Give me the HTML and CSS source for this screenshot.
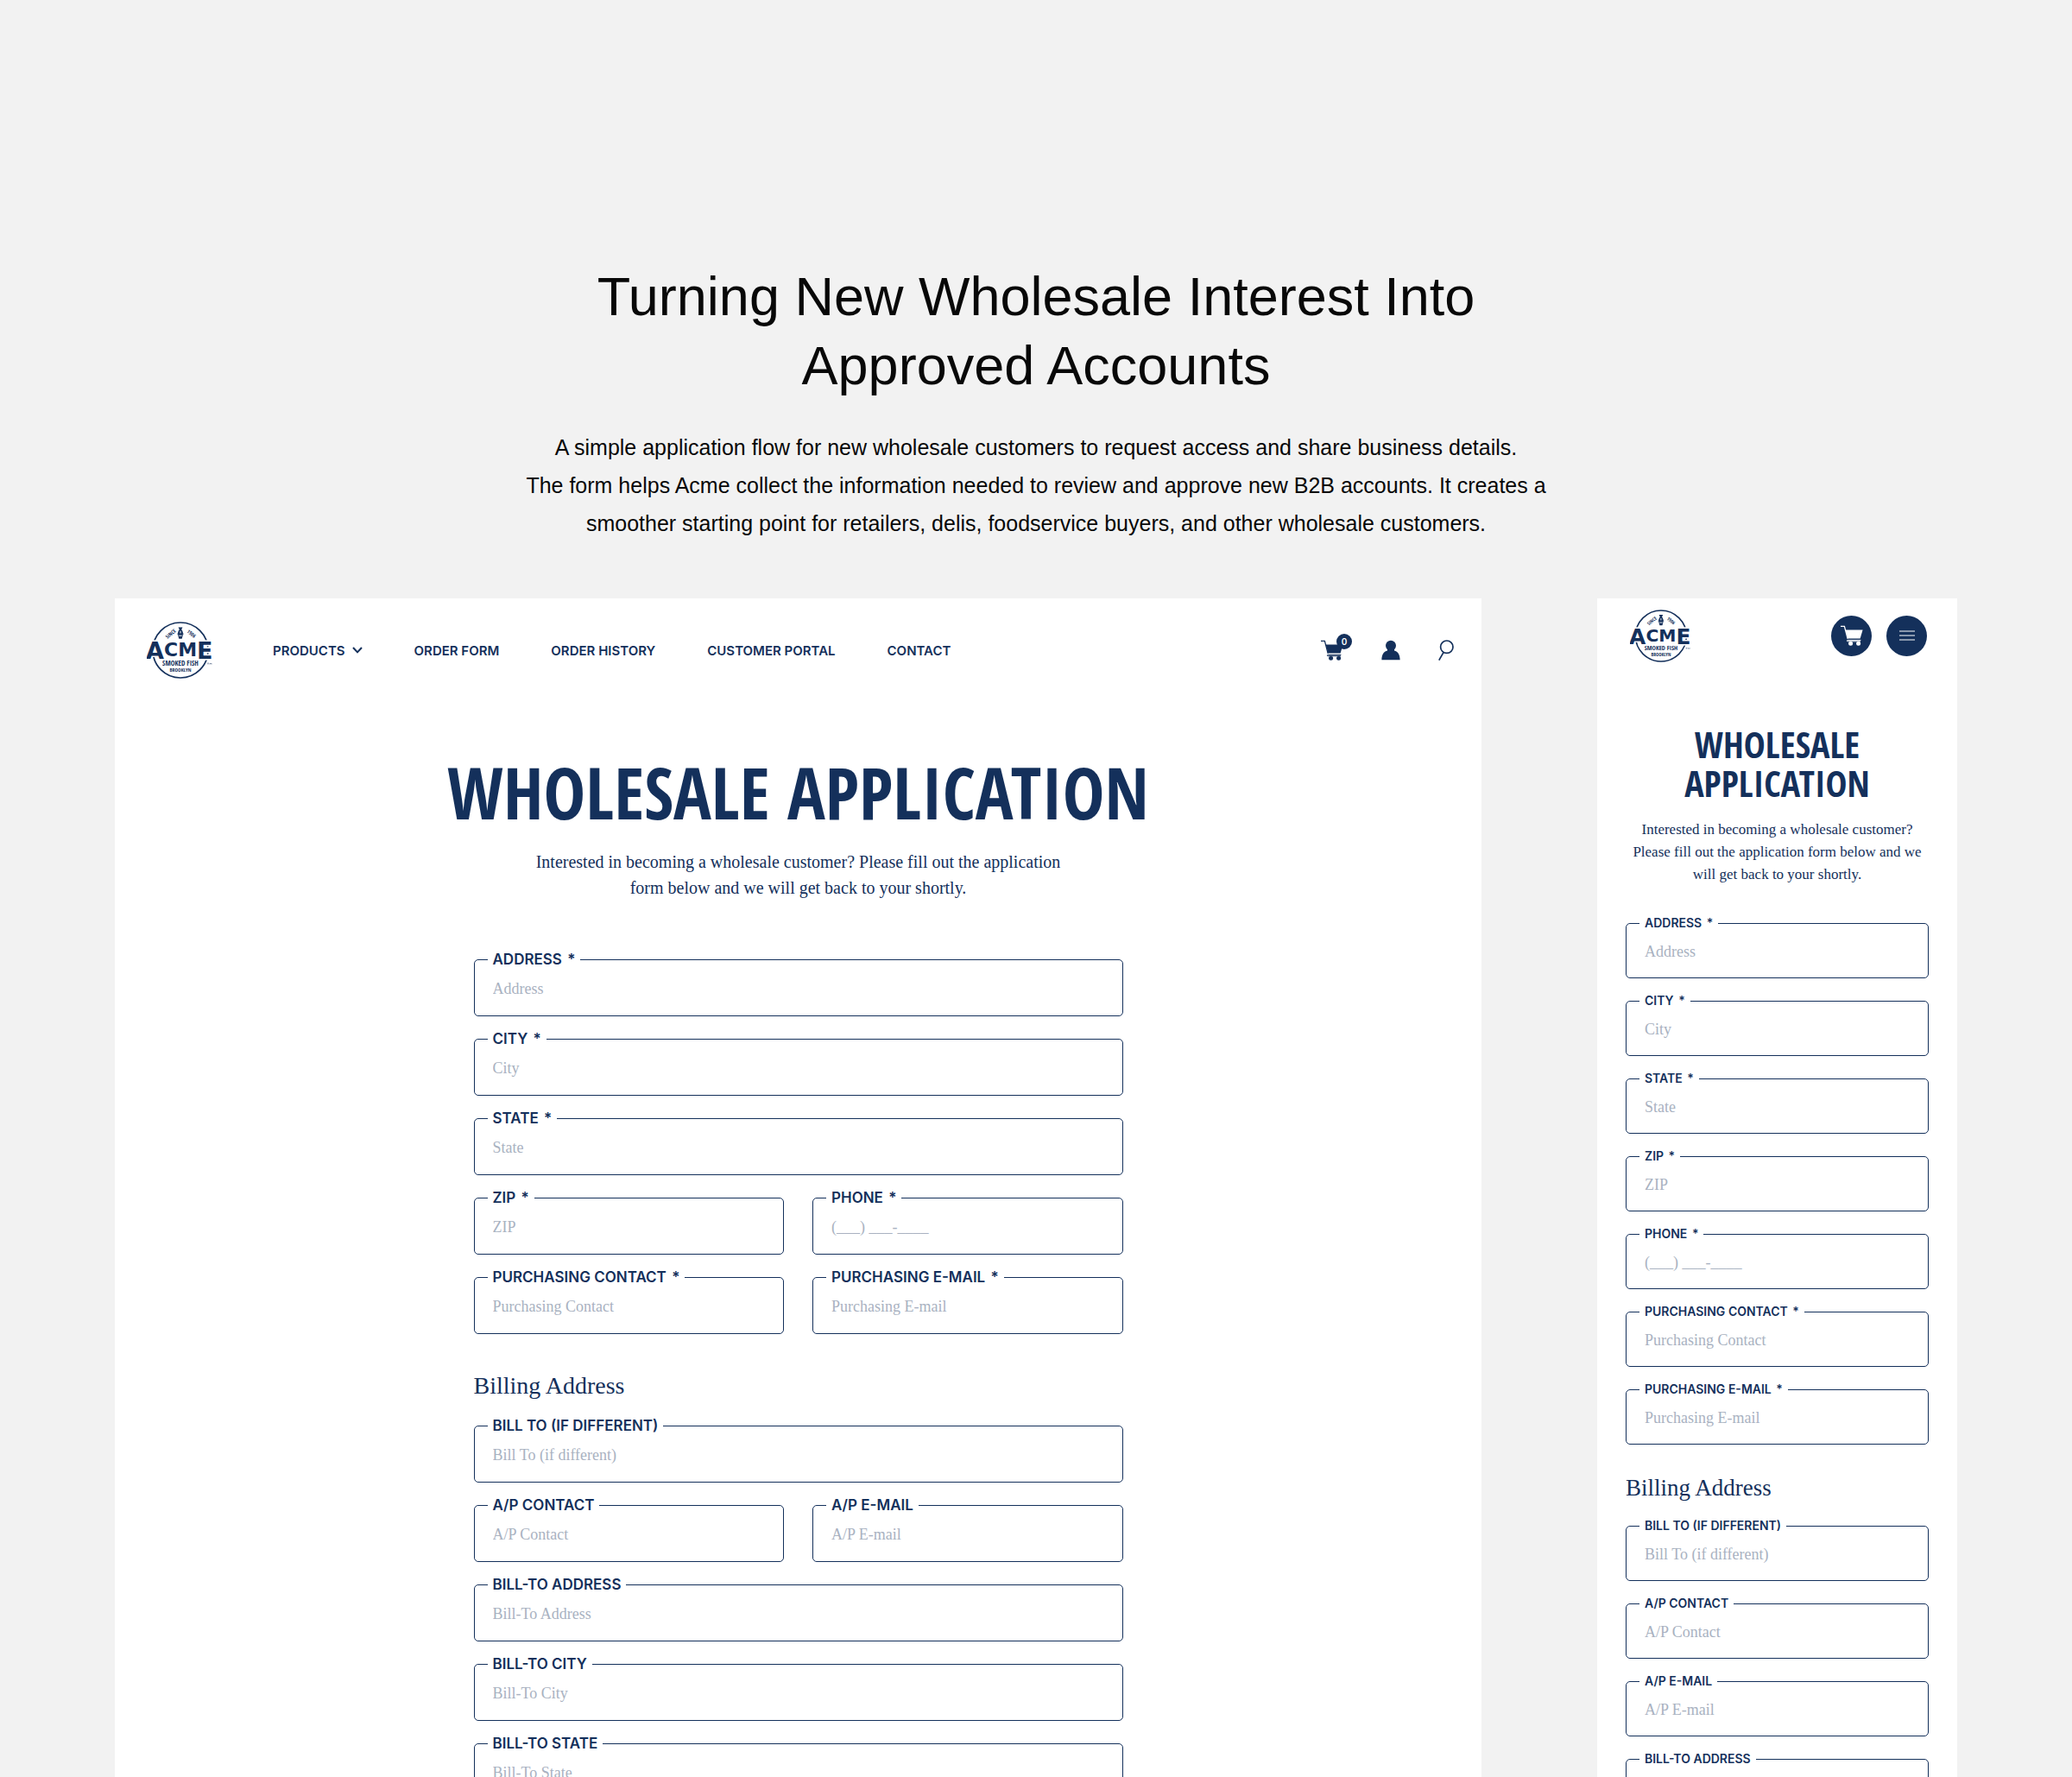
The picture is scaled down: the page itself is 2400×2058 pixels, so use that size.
FILE: index.html
```html
<!DOCTYPE html>
<html lang="en">
<head>
  <meta charset="utf-8">
  <title>Acme Wholesale Application</title>
  <meta name="viewport" content="width=device-width, initial-scale=1">
  <link rel="stylesheet" href="styles.css">
</head>
<body>
  <!-- shared icons -->
  <svg class="sprite" aria-hidden="true">
    <symbol id="logo" viewBox="0 0 76 66">
      <circle cx="39" cy="33" r="32" fill="none" stroke="currentColor" stroke-width="1.7"/>
      <path d="M36.5 6.5h5l-1.3 2.6c1.6 1.6 2.2 4.6 1.4 7.4l-.9 3.2h-3.4l-.9-3.2c-.8-2.8-.2-5.8 1.4-7.4z" fill="currentColor"/>
      <path d="M36.6 12l-1.4 2.5 1 .2zM41.4 12l1.4 2.5-1 .2z" fill="currentColor"/>
      <path d="M37.3 16.2h3.4M39 10.8v2.6" stroke="#fff" stroke-width="1" fill="none"/>
      <text class="logo-small" transform="translate(24 20) rotate(-40)">SINCE</text>
      <text class="logo-small" transform="translate(46 12) rotate(40)">1906</text>
      <text class="logo-name" y="40"><tspan class="logo-big" x="-1" y="43">A</tspan><tspan x="20" y="40">CM</tspan><tspan class="logo-big" x="58" y="43">E</tspan></text>
      <text class="logo-line" x="39" y="51">SMOKED FISH</text>
      <text class="logo-place" x="39" y="58">BROOKLYN</text>
      <path d="M70 48h2M71 48v1.6M73 49.6v-1.6l1 1 1-1v1.6" stroke="currentColor" stroke-width=".4" fill="none"/>
    </symbol>
    <symbol id="cart" viewBox="0 0 26 24">
      <path d="M0 1.4h4.4l3.8 14.4" fill="none" stroke="currentColor" stroke-width="1.3"/>
      <path d="M5.6 5.6H25.6L22.6 15.4H8.4z" fill="currentColor"/>
      <path d="M23.4 17.4H8.2c-1.2 0-1.2 1.4 0 1.4H23" fill="none" stroke="currentColor" stroke-width="1"/>
      <circle cx="11.6" cy="21.2" r="2.5" fill="currentColor"/>
      <circle cx="20.6" cy="21.2" r="2.5" fill="currentColor"/>
    </symbol>
  </svg>

  <div class="showcase">
    <div class="lead">
      <h1>Turning New Wholesale Interest Into<br>Approved Accounts</h1>
      <p>A simple application flow for new wholesale customers to request access and share business details.<br>
      The form helps Acme collect the information needed to review and approve new B2B accounts. It creates a<br>
      smoother starting point for retailers, delis, foodservice buyers, and other wholesale customers.</p>
    </div>

    <div class="screens">
      <div class="screen desktop">
        <header class="topbar">
          <a href="#" class="logo" aria-label="Acme Smoked Fish"><svg><use href="#logo"/></svg></a>
          <nav class="menu">
            <a href="#">Products
              <svg class="chevron" viewBox="0 0 12 8"><path d="M1 1l5 5.4L11 1" fill="none" stroke="currentColor" stroke-width="2"/></svg>
            </a>
            <a href="#">Order Form</a>
            <a href="#">Order History</a>
            <a href="#">Customer Portal</a>
            <a href="#">Contact</a>
          </nav>
          <div class="tools">
            <a href="#" class="tool-cart" aria-label="Cart"><svg class="icon-cart"><use href="#cart"/></svg><span class="badge">0</span></a>
            <a href="#" aria-label="Account">
              <svg class="icon-user" viewBox="0 0 22 24"><circle cx="11" cy="6.8" r="6" fill="currentColor"/><path d="M7 10h8v2.6c4.4 1.2 6.6 5 6.6 10.6H.4C.4 17.6 2.6 13.8 7 12.6z" fill="currentColor"/></svg>
            </a>
            <a href="#" aria-label="Search">
              <svg class="icon-search" viewBox="0 0 18 24"><circle cx="9.8" cy="8.2" r="7.2" fill="none" stroke="currentColor" stroke-width="1.7"/><path d="M6 14.6L.8 23.6" stroke="currentColor" stroke-width="1.7"/></svg>
            </a>
          </div>
        </header>

        <h2>Wholesale Application</h2>
        <p class="intro">Interested in becoming a wholesale customer? Please fill out the application<br>form below and we will get back to your shortly.</p>

        <form class="form">
          <div class="field wide"><label for="d-address">Address <i>*</i></label><input id="d-address" type="text" placeholder="Address"></div>
          <div class="field wide"><label for="d-city">City <i>*</i></label><input id="d-city" type="text" placeholder="City"></div>
          <div class="field wide"><label for="d-state">State <i>*</i></label><input id="d-state" type="text" placeholder="State"></div>
          <div class="field"><label for="d-zip">ZIP <i>*</i></label><input id="d-zip" type="text" placeholder="ZIP"></div>
          <div class="field"><label for="d-phone">Phone <i>*</i></label><input id="d-phone" type="tel" placeholder="(___) ___-____"></div>
          <div class="field"><label for="d-contact">Purchasing Contact <i>*</i></label><input id="d-contact" type="text" placeholder="Purchasing Contact"></div>
          <div class="field"><label for="d-email">Purchasing E-mail <i>*</i></label><input id="d-email" type="email" placeholder="Purchasing E-mail"></div>
          <h3>Billing Address</h3>
          <div class="field wide"><label for="d-billto">Bill To (if different)</label><input id="d-billto" type="text" placeholder="Bill To (if different)"></div>
          <div class="field"><label for="d-apcontact">A/P Contact</label><input id="d-apcontact" type="text" placeholder="A/P Contact"></div>
          <div class="field"><label for="d-apemail">A/P E-mail</label><input id="d-apemail" type="email" placeholder="A/P E-mail"></div>
          <div class="field wide"><label for="d-baddress">Bill-To Address</label><input id="d-baddress" type="text" placeholder="Bill-To Address"></div>
          <div class="field wide"><label for="d-bcity">Bill-To City</label><input id="d-bcity" type="text" placeholder="Bill-To City"></div>
          <div class="field wide"><label for="d-bstate">Bill-To State</label><input id="d-bstate" type="text" placeholder="Bill-To State"></div>
        </form>
      </div>

      <div class="screen mobile">
        <header class="topbar">
          <a href="#" class="logo" aria-label="Acme Smoked Fish"><svg><use href="#logo"/></svg></a>
          <div class="tools">
            <button type="button" class="round" aria-label="Cart"><svg class="icon-cart"><use href="#cart"/></svg></button>
            <button type="button" class="round" aria-label="Menu"><svg class="icon-menu" viewBox="0 0 18 12"><path d="M0 1h18M0 6h18M0 11h18" stroke="currentColor" stroke-width="1.2"/></svg></button>
          </div>
        </header>

        <h2>Wholesale<br>Application</h2>
        <p class="intro">Interested in becoming a wholesale customer?<br>Please fill out the application form below and we<br>will get back to your shortly.</p>

        <form class="form">
          <div class="field"><label for="m-address">Address <i>*</i></label><input id="m-address" type="text" placeholder="Address"></div>
          <div class="field"><label for="m-city">City <i>*</i></label><input id="m-city" type="text" placeholder="City"></div>
          <div class="field"><label for="m-state">State <i>*</i></label><input id="m-state" type="text" placeholder="State"></div>
          <div class="field"><label for="m-zip">ZIP <i>*</i></label><input id="m-zip" type="text" placeholder="ZIP"></div>
          <div class="field"><label for="m-phone">Phone <i>*</i></label><input id="m-phone" type="tel" placeholder="(___) ___-____"></div>
          <div class="field"><label for="m-contact">Purchasing Contact <i>*</i></label><input id="m-contact" type="text" placeholder="Purchasing Contact"></div>
          <div class="field"><label for="m-email">Purchasing E-mail <i>*</i></label><input id="m-email" type="email" placeholder="Purchasing E-mail"></div>
          <h3>Billing Address</h3>
          <div class="field"><label for="m-billto">Bill To (if different)</label><input id="m-billto" type="text" placeholder="Bill To (if different)"></div>
          <div class="field"><label for="m-apcontact">A/P Contact</label><input id="m-apcontact" type="text" placeholder="A/P Contact"></div>
          <div class="field"><label for="m-apemail">A/P E-mail</label><input id="m-apemail" type="email" placeholder="A/P E-mail"></div>
          <div class="field"><label for="m-baddress">Bill-To Address</label><input id="m-baddress" type="text"></div>
        </form>
      </div>
    </div>
  </div>
</body>
</html>
```
FILE: styles.css
```css
* {
  box-sizing: border-box;
}
body {
  margin: 0;
  background: #f2f2f2;
  color: #14305b;
  font-family: Inter, sans-serif;
}
h1, h2, h3, p {
  margin: 0;
}
a {
  color: inherit;
  text-decoration: none;
}
svg {
  display: block;
}
.sprite {
  display: none;
}

/* the screens run off the bottom of the window */
.showcase {
  display: flex;
  flex-direction: column;
  height: 100vh;
  padding: 303px 133px 0;
  overflow: hidden;
}
.lead {
  color: #080808;
  font-family: "Liberation Sans", Arial, sans-serif;
  text-align: center;
}
.lead h1 {
  font-size: 63px;
  font-weight: 400;
  line-height: 80px;
}
.lead p {
  margin-top: 33px;
  font-size: 25px;
  line-height: 44px;
}
.screens {
  display: grid;
  grid-template-columns: minmax(0, 1583fr) minmax(0, 417fr);
  gap: 134px;
  flex: 1;
  min-height: 0;
  margin-top: 65px;
}
.screen {
  background: #fff;
}

/* header */
.topbar {
  display: flex;
  align-items: center;
  height: 120px;
  padding: 0 32px 0 37px;
}
.logo svg {
  width: 76px;
  height: 66px;
  overflow: visible;
}
.logo-name {
  font-family: "DejaVu Sans", sans-serif;
  font-weight: 700;
  font-size: 22px;
  fill: currentColor;
  stroke: #fff;
  stroke-width: 3px;
  paint-order: stroke;
}
.logo-big {
  font-size: 27px;
}
.logo-small,
.logo-line,
.logo-place {
  font-family: "Open Sans Condensed", "Open Sans", sans-serif;
  font-weight: 700;
  font-size: 6px;
  fill: currentColor;
}
.logo-line {
  font-size: 8px;
  text-anchor: middle;
}
.logo-place {
  text-anchor: middle;
}
.menu {
  display: flex;
  gap: 60px;
  margin-left: 70px;
  font-size: 15px;
  font-weight: 600;
  text-transform: uppercase;
}
.menu a {
  display: flex;
  align-items: center;
  gap: 8px;
}
.chevron {
  width: 12px;
  height: 8px;
}
.tools {
  display: flex;
  align-items: center;
  margin-left: auto;
  gap: 44px;
}
.icon-cart {
  width: 26px;
  height: 24px;
}
.icon-user {
  width: 22px;
  height: 24px;
}
.icon-search {
  width: 18px;
  height: 24px;
}
.tool-cart {
  position: relative;
}
.badge {
  position: absolute;
  top: -7px;
  left: 18px;
  width: 18px;
  height: 18px;
  border-radius: 50%;
  background: #14305b;
  color: #fff;
  font-size: 10px;
  font-weight: 600;
  line-height: 18px;
  text-align: center;
}

/* title */
h2 {
  margin-top: 60px;
  font-family: "Open Sans Condensed", "Open Sans", sans-serif;
  font-size: 82px;
  font-weight: 700;
  line-height: 88px;
  text-align: center;
  text-transform: uppercase;
}
.intro {
  margin-top: 22px;
  font-family: "Liberation Serif", serif;
  font-size: 20px;
  line-height: 30px;
  text-align: center;
}

/* form */
.form {
  display: grid;
  grid-template-columns: 1fr 1fr;
  gap: 26px 33px;
  max-width: 752px;
  margin: 68px auto 0;
}
.wide,
h3 {
  grid-column: 1 / -1;
}
h3 {
  margin: 17px 0 3px;
  font-family: "Liberation Serif", serif;
  font-size: 28px;
  font-weight: 400;
  line-height: 34px;
}
.field {
  position: relative;
}
.field label {
  position: absolute;
  top: -10px;
  left: 16px;
  padding: 0 6px;
  background: #fff;
  font-size: 17px;
  font-weight: 600;
  line-height: 20px;
  text-transform: uppercase;
}
.field i {
  margin-left: 2px;
  font-style: normal;
}
.field input {
  display: block;
  width: 100%;
  height: 66px;
  padding: 3px 21px 0;
  border: 1px solid #14305b;
  border-radius: 5px;
  background: none;
  color: #14305b;
  font-family: "Liberation Serif", serif;
  font-size: 18px;
}
.field input::placeholder {
  color: #a9b2c1;
  opacity: 1;
}

/* phone layout */
.mobile .topbar {
  height: 86px;
  padding: 0 35px 0 38px;
}
.mobile .logo svg {
  width: 70px;
  height: 61px;
}
.mobile .tools {
  gap: 17px;
}
.round {
  display: flex;
  align-items: center;
  justify-content: center;
  width: 47px;
  height: 47px;
  padding: 0;
  border: none;
  border-radius: 50%;
  background: #14305b;
  color: #fff;
  cursor: pointer;
}
.icon-menu {
  width: 18px;
  height: 12px;
}
.mobile h2 {
  font-size: 42px;
  line-height: 45px;
}
.mobile .intro {
  margin-top: 19px;
  font-size: 17px;
  line-height: 26px;
}
.mobile .form {
  grid-template-columns: 1fr;
  margin: 43px 33px 0;
}
.mobile h3 {
  margin: 7px 0 1px;
  font-size: 27px;
}
.mobile .field label {
  font-size: 14px;
}
.mobile .field input {
  height: 64px;
}
```
